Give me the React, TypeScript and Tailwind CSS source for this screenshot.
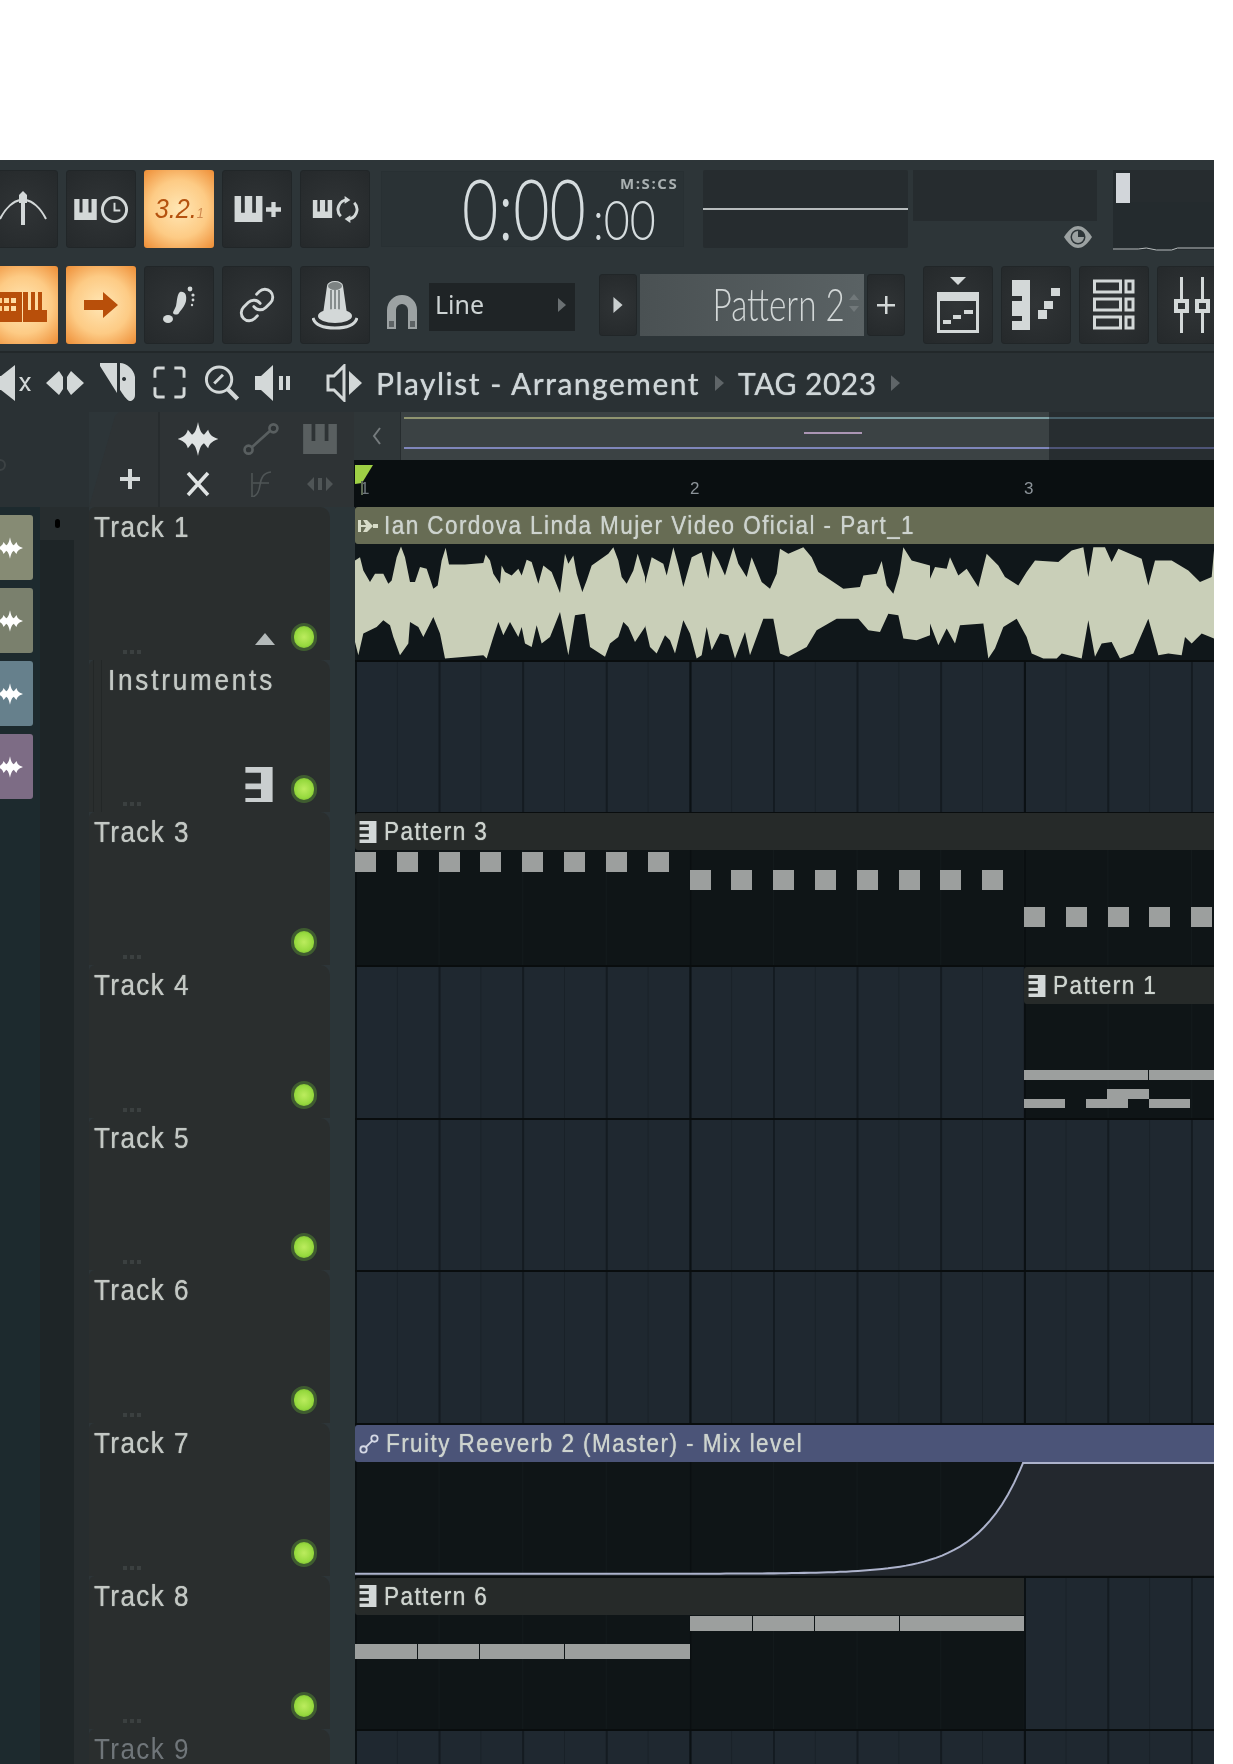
import type { ReactNode } from 'react';
import { Link } from 'lucide-react';

const cropA = (pts: number[][]) => pts.map(([x, y]) => [355 + x / 3, 540 + y / 3]);
const cropB = (pts: number[][]) => pts.map(([x, y]) => [640 + x / 3, 540 + y / 3]);
const cropC = (pts: number[][]) => pts.map(([x, y]) => [925 + x / 3, 540 + y / 3]);

const waveTop = [
  ...cropA([[0,60],[15,50],[25,90],[45,125],[60,100],[85,100],[100,130],[110,120],[125,50],[138,18],[150,50],[165,125],[180,125],[195,80],[215,85],[235,145],[248,135],[260,60],[272,22],[282,72],[330,72],[385,68],[392,42],[405,60],[415,100],[435,130],[440,75],[450,95],[470,105],[490,85],[500,105],[515,58],[530,65],[550,130],[565,75],[590,95],[615,158],[630,40],[640,70],[655,45],[665,100],[682,155],[695,120],[710,75],[760,40],[775,20],[790,60],[800,110],[815,130],[835,90],[848,40],[870,110]]),
  ...cropB([[15,130],[35,50],[70,70],[80,105],[100,20],[115,75],[130,140],[155,50],[185,35],[205,115],[218,30],[235,60],[255,105],[280,20],[295,70],[320,110],[335,50],[365,125],[390,145],[410,100],[420,25],[445,40],[490,20],[515,50],[535,95],[580,125],[610,145],[660,140],[670,105],[710,100],[725,62],[740,135],[760,160],[778,100],[790,20],[815,60],[870,75]]),
  ...cropC([[15,115],[30,80],[65,85],[75,50],[100,105],[125,85],[160,140],[185,40],[220,75],[240,110],[280,135],[305,95],[330,60],[400,65],[440,30],[475,20],[490,110],[505,20],[540,20],[560,65],[580,25],[650,55],[670,135],[690,60],[740,60],[790,90],[825,125],[860,110],[867,30]]),
];
const waveBottom = [
  ...cropA([[0,305],[10,345],[25,280],[65,260],[85,240],[105,255],[115,290],[135,345],[160,310],[165,245],[190,260],[205,290],[235,230],[255,280],[270,355],[385,345],[395,355],[415,290],[430,245],[445,285],[465,245],[490,290],[500,260],[510,310],[530,320],[545,255],[560,310],[585,290],[615,215],[640,345],[660,225],[690,220],[705,320],[750,350],[765,310],[790,290],[805,245],[820,260],[840,305],[870,260]]),
  ...cropB([[15,255],[30,320],[50,340],[75,285],[90,300],[105,340],[130,240],[150,280],[170,355],[185,345],[200,260],[215,330],[240,280],[265,285],[285,355],[315,275],[330,345],[370,235],[400,235],[420,340],[445,350],[500,320],[530,270],[590,235],[655,235],[685,270],[720,275],[745,220],[775,225],[790,295],[830,300],[870,285]]),
  ...cropC([[15,250],[40,315],[65,265],[90,310],[105,255],[175,250],[190,355],[210,325],[235,260],[275,235],[305,290],[320,340],[355,355],[395,355],[410,340],[470,355],[490,240],[510,350],[530,310],[560,305],[585,355],[625,340],[670,235],[700,345],[730,340],[770,345],[780,290],[800,310],[830,280],[867,295]]),
];
const wavePoints = [...waveTop, ...[...waveBottom].reverse()].map((p) => p.join(',')).join(' ');

// automation curve, exponential up to bar 3
const curve: string[] = ['355,1573', '700,1573'];
for (let x = 708; x <= 1023; x += 6) {
  const t = (x - 700) / 323;
  curve.push(`${x},${(1573 - (110 * (Math.exp(7.2 * t) - 1)) / (Math.exp(7.2) - 1)).toFixed(1)}`);
}
curve.push('1023,1463', '1214,1463');
const curveLine = curve.join(' ');

const ICON = '#d3d8d8';
const BROWN = '#b84f0a';

function PianoGlyph({ className = 'w-[30px] h-[28px]' }: { className?: string }) {
  return (
    <svg viewBox="0 0 30 28" className={className} fill={ICON}>
      <path d="M0 0h7v18h4V0h8v18h4V0h7v28H0z" />
    </svg>
  );
}

function Sparkle({ className = 'w-[26px] h-[38px]', color = '#fff' }: { className?: string; color?: string }) {
  return (
    <svg viewBox="0 0 48 40" className={className} fill={color}>
      <path d="M24 0c2 10 4 13 7 15 2-2 3-4 5-6 1 4 3 8 12 11-9 3-11 7-12 11-2-2-3-4-5-6-3 2-5 5-7 15-2-10-4-13-7-15-2 2-3 4-5 6-1-4-3-8-12-11 9-3 11-7 12-11 2 2 3 4 5 6 3-2 5-5 7-15z" />
    </svg>
  );
}

function Btn({ children, on, className = 'w-[70px] h-[78px]' }: { children?: ReactNode; on?: boolean; className?: string }) {
  return (
    <div
      className={`${className} shrink-0 flex items-center justify-center rounded-[3px] ${
        on
          ? 'bg-[radial-gradient(circle,#ffe6b4_0%,#fdcb85_55%,#ee8d35_100%)]'
          : 'bg-[radial-gradient(circle,#303436_0%,#25292b_100%)] border border-[#212628]'
      }`}
    >
      {children}
    </div>
  );
}

function Led() {
  return <div className="w-[26px] h-[28px] rounded-full border-[3px] border-[#3f5c30] bg-[radial-gradient(circle_at_50%_50%,#bcec5e_0%,#96d93e_60%,#67a52a_100%)]" />;
}

function NoteBlock({ className }: { className: string }) {
  return <div className={`absolute bg-[#9c9f9e] ${className}`} />;
}

function PatIcon() {
  return (
    <svg viewBox="0 0 20 26" className="w-[20px] h-[22px] shrink-0" fill="#d3d8d8">
      <path d="M0 0h20v26H0v-4h11v-3H0v-4h11v-4H0V7h11V4H0z" />
    </svg>
  );
}

const labelFont = 'font-["Liberation_Sans",sans-serif]';

function Clip({ className, header, icon, title, children, body = 'dark' }: { className: string; header: string; icon: ReactNode; title: string; children?: ReactNode; body?: 'dark' | 'none' }) {
  return (
    <div className={`absolute overflow-hidden flex flex-col ${className}`}>
      <div className={`h-[37px] shrink-0 flex items-center gap-[6px] pl-[3px] rounded-l-[3px] ${header}`}>
        {icon}
        <span className={`${labelFont} inline-block origin-left scale-x-[0.9] text-[25px] leading-none tracking-[1.6px] text-[#cdd3ce] [text-shadow:0_0_1px_#cdd3ce] whitespace-nowrap`}>{title}</span>
      </div>
      <div className={`relative flex-1 ${body === 'dark' ? 'bg-[#0f1517] bg-[linear-gradient(90deg,#0a0f11_1.5px,transparent_1.5px),linear-gradient(90deg,#131a1c_1px,transparent_1px)] bg-[size:334.5px_100%,83.6px_100%]' : ''}`}>
        {children}
      </div>
    </div>
  );
}

function TrackRow({ label, extra, indent, dim, hasLed = true, children }: { label: string; extra?: ReactNode; indent?: boolean; dim?: boolean; hasLed?: boolean; children?: ReactNode }) {
  return (
    <div className="h-[152.7px] shrink-0 flex">
      <div className="relative w-[241px] bg-[#2a2e2e] rounded-tr-[10px] rounded-tl-[6px]">
        <span className={`absolute top-[3px] ${indent ? 'left-[19px] tracking-[3.2px]' : 'left-[5px] tracking-[1.6px]'} ${labelFont} inline-block origin-left scale-x-[0.87] text-[30px] leading-[34px] ${dim ? 'text-[#70767a]' : 'text-[#c3c8c4] [text-shadow:0_0_1px_#c3c8c4]'}`}>{label}</span>
        {indent && <div className="absolute left-[4px] top-0 bottom-0 w-[9px] border-x border-[#232727]" />}
        <div className="absolute left-[34px] bottom-[6px] flex gap-[3px]">
          <div className="size-[4px] bg-[#3b4040]" /><div className="size-[4px] bg-[#3b4040]" /><div className="size-[4px] bg-[#3b4040]" />
        </div>
        {extra}
        {hasLed && <div className="absolute left-[202px] bottom-[9px]"><Led /></div>}
      </div>
      <div className="w-[25px] bg-[#2b3538]" />
      <div className="relative flex-1 border-t-2 border-[#090d0e] bg-[#1f2830] bg-[linear-gradient(90deg,#0b1114_2px,transparent_2px),linear-gradient(90deg,#141b21_1.5px,transparent_1.5px),linear-gradient(90deg,#192128_1px,transparent_1px)] bg-[size:334.5px_100%,83.6px_100%,41.8px_100%]">
        {children}
      </div>
    </div>
  );
}

export default function App() {
  const steps = [0, 1, 2, 3, 4, 5, 6, 7];
  return (
    <div className="w-[1233px] h-[1764px] bg-white pt-[160px] overflow-hidden">
      <div className="w-[1214px] h-[1604px] bg-[#2d3538] overflow-hidden flex flex-col font-['Open_Sans',sans-serif] blur-[0.5px]">
        {/* Top toolbar */}
        <div className="h-[96px] shrink-0 flex items-center -ml-[12px] pt-[2px]">
          <div className="flex gap-2">
            <Btn>
              <svg viewBox="0 0 50 40" className="w-[50px] h-[40px]" fill="none" stroke={ICON} strokeWidth="2">
                <path d="M2 30C8 18 16 12 22 11M48 30C42 18 34 12 28 11" />
                <path d="M25 2l4 4v8h-2v22h-4V14h-2V6z" fill={ICON} stroke="none" />
              </svg>
            </Btn>
            <Btn>
              <div className="flex items-center gap-[2px]">
                <PianoGlyph className="w-[25px] h-[21px]" />
                <svg viewBox="0 0 30 30" className="size-[29px]" fill="none" stroke={ICON} strokeWidth="3"><circle cx="15" cy="15" r="12.5" /><path d="M15 8v8h6" strokeWidth="2" /></svg>
              </div>
            </Btn>
            <Btn on>
              <span className="italic text-[#b5520f] text-[28px] font-['Liberation_Sans',sans-serif] leading-none inline-block scale-x-[0.9]">3.2.<span className="text-[14px] text-[#d08a50]">1</span></span>
            </Btn>
            <Btn>
              <div className="flex items-center gap-[3px]">
                <PianoGlyph className="w-[29px] h-[26px]" />
                <svg viewBox="0 0 14 14" className="size-[15px]" fill={ICON}><path d="M5 0h4v5h5v4H9v5H5V9H0V5h5z" /></svg>
              </div>
            </Btn>
            <Btn>
              <div className="flex items-center gap-[2px]">
                <PianoGlyph className="w-[23px] h-[18px]" />
                <svg viewBox="0 0 24 30" className="w-[23px] h-[29px]" fill="none" stroke={ICON} strokeWidth="3"><path d="M5 22a10 10 0 0 1 7-17M19 8a10 10 0 0 1-7 17" /><path d="M9 1l6 4-6 4zM15 21l-6 4 6 4z" fill={ICON} stroke="none" /></svg>
              </div>
            </Btn>
          </div>
          {/* Time display */}
          <div className="relative ml-[11px] w-[303px] h-[76px] shrink-0 bg-[#2a3235] border border-[#283033]">
            <div className="absolute left-[80px] top-[-6px] flex items-baseline text-[#d5dcde] font-['Lato',sans-serif] font-light">
              <span className="text-[84px] leading-[84px] inline-block w-[131px] origin-left scale-x-[0.745] whitespace-nowrap">0:00</span>
              <span className="text-[56px] leading-[56px] inline-block origin-left scale-x-[0.8] whitespace-nowrap">:00</span>
            </div>
            <span className="absolute left-[238px] top-[3px] text-[15px] tracking-[1.6px] font-bold leading-4 text-[#a9b0b1]">M:S:CS</span>
          </div>
          {/* Oscilloscope and hints */}
          <div className="relative ml-[19px] w-[205px] h-[78px] shrink-0 bg-[#262c2f] rounded-[2px] flex items-center">
            <div className="w-full h-[2px] bg-[#b7bcbd]" />
          </div>
          <div className="ml-[5px] w-[184px] h-[78px] shrink-0 flex flex-col">
            <div className="h-[55px] bg-[#262c2f]" />
            <div className="flex-1 flex justify-end items-center pr-[5px] pt-[5px]">
              <svg viewBox="0 0 28 22" className="w-[28px] h-[22px]"><path d="M0 11C5 3 10 0 14 0s9 3 14 11c-5 8-10 11-14 11S5 19 0 11z" fill="#9ba1a1" /><circle cx="14" cy="11" r="7.5" fill="#2d3538" /><path d="M14 5a6 6 0 1 0 6 6h-6z" fill="#9ba1a1" /></svg>
            </div>
          </div>
          <div className="relative ml-[16px] flex-1 h-[80px] bg-[#242b2e] mt-[2px]">
            <div className="absolute left-[3px] top-[3px] w-[14px] h-[30px] bg-[#d2d6da]" />
            <div className="absolute left-[17px] top-[0px] right-0 h-[32px] bg-[#262c2f]" />
            <svg viewBox="0 0 100 8" preserveAspectRatio="none" className="absolute left-0 right-0 bottom-[-2px] w-full h-[8px]" fill="none" stroke="#b7bcbd" strokeWidth="1"><path d="M0 5h25l8-1 10 2h15l6-2h36" vectorEffect="non-scaling-stroke" /></svg>
          </div>
        </div>

        {/* Second toolbar */}
        <div className="h-[97px] shrink-0 flex items-center -ml-[12px] border-b-2 border-[#22282a] pt-[2px]">
          <div className="flex gap-2 shrink-0">
            <Btn on>
              <div className="flex gap-[1px] -ml-[8px]">
                <svg viewBox="0 0 30 34" className="w-[30px] h-[34px]" fill={BROWN}><path d="M0 4h30v30H0zM5 10v5h5v-5zm7 0v5h5v-5zm7 0v5h5v-5zM5 18v5h5v-5zm7 0v5h5v-5zm7 0v5h5v-5z" /></svg>
                <svg viewBox="0 0 24 34" className="w-[24px] h-[34px]" fill={BROWN}><path d="M0 4h5v18h3V4h4v18h3V4h4v18h5v12H0z" /></svg>
              </div>
            </Btn>
            <Btn on>
              <svg viewBox="0 0 34 26" className="w-[34px] h-[26px]" fill={BROWN}><path d="M0 8h19V0l15 13-15 13v-8H0z" /></svg>
            </Btn>
            <Btn>
              <svg viewBox="0 0 34 38" className="w-[34px] h-[38px]" fill={ICON}>
                <ellipse cx="6" cy="33" rx="5" ry="4" />
                <path d="M18 6c5-1 7 3 6 9-1 5-5 9-7 12-1 2-5 2-6 0 0-2 2-4 3-7 1-4 1-12 4-14z" />
                <circle cx="28" cy="3" r="2.4" /><circle cx="31" cy="9" r="1.6" /><circle cx="31" cy="14" r="1.4" /><circle cx="30" cy="19" r="1.2" />
              </svg>
            </Btn>
            <Btn>
              <Link className="size-[38px] text-[#d3d8d8]" strokeWidth={1.8} />
            </Btn>
            <Btn>
              <svg viewBox="0 0 46 50" className="w-[46px] h-[50px]">
                <path d="M15 6a8 5 0 0 1 16 0l4 28H11z" fill={ICON} />
                <ellipse cx="23" cy="6" rx="7" ry="4" fill="#7d8383" />
                <path d="M19 10v20M23 10v20M27 10v20" stroke="#6e7474" strokeWidth="1.5" />
                <ellipse cx="23" cy="36" rx="17" ry="7" fill={ICON} />
                <path d="M1 38c2 7 11 10 22 10s20-3 22-10" fill="none" stroke={ICON} strokeWidth="3" />
              </svg>
            </Btn>
          </div>
          <svg viewBox="0 0 30 34" className="ml-[17px] mt-[15px] w-[30px] h-[34px] shrink-0" fill="#9ca2a3">
            <path d="M0 15a15 15 0 0 1 30 0v19H21V15a6 6 0 0 0-12 0v19H0z" />
            <path d="M2 26h5v6H2zM23 26h5v6h-5z" fill="#5d6365" />
          </svg>
          <div className="ml-[12px] mt-[4px] w-[146px] h-[48px] shrink-0 bg-[#1f2426] flex items-center justify-between pl-[6px] pr-[9px] pb-[4px]">
            <span className="text-[25px] leading-none text-[#cdd3d3] font-['Noto_Sans',sans-serif]">Line</span>
            <svg viewBox="0 0 8 14" className="w-[8px] h-[14px]" fill="#6a7072"><path d="M0 0l8 7-8 7z" /></svg>
          </div>
          <Btn className="ml-[24px] w-[38px] h-[62px]">
            <svg viewBox="0 0 8 14" className="w-[10px] h-[16px]" fill="#c9cecf"><path d="M0 0l8 7-8 7z" /></svg>
          </Btn>
          <div className="ml-[3px] w-[224px] h-[62px] shrink-0 bg-[linear-gradient(90deg,#4a5153,#5a6264)] flex items-center justify-end pr-[19px] relative">
            <span className="inline-block text-[45px] leading-none text-[#d2d7d7] font-['Lato',sans-serif] font-light origin-right scale-x-[0.74] whitespace-nowrap">Pattern 2</span>
            <div className="absolute right-[5px] top-[20px] flex flex-col gap-[6px]">
              <svg viewBox="0 0 10 6" className="w-[10px] h-[6px]" fill="#71787a"><path d="M0 6l5-6 5 6z" /></svg>
              <svg viewBox="0 0 10 6" className="w-[10px] h-[6px]" fill="#71787a"><path d="M0 0l5 6 5-6z" /></svg>
            </div>
          </div>
          <Btn className="ml-[3px] w-[38px] h-[62px]">
            <svg viewBox="0 0 18 18" className="size-[18px]" fill={ICON}><path d="M8 0h2.5v8H18v2.5h-7.5V18H8v-7.5H0V8h8z" /></svg>
          </Btn>
          <div className="ml-[18px] flex gap-2 shrink-0">
            <Btn>
              <svg viewBox="0 0 44 56" className="w-[44px] h-[56px]" fill={ICON}>
                <path d="M14 0h16l-8 8z" />
                <path d="M1 15h42v41H1zm3 9v29h36V24z" />
                <path d="M7 43h8v4H7zM17 38h8v4h-8zM28 33h9v4h-9z" />
              </svg>
            </Btn>
            <Btn>
              <svg viewBox="0 0 48 50" className="w-[48px] h-[50px]" fill={ICON}>
                <path d="M0 0h18v50H0v-9h10v-5H0V21h10v-5H0z" />
                <path d="M26 30h9v9h-9zM32 21h9v8h-9zM39 8h9v8h-9z" />
              </svg>
            </Btn>
            <Btn>
              <svg viewBox="0 0 42 52" className="w-[42px] h-[52px]" fill="none" stroke={ICON} strokeWidth="3">
                <rect x="1.5" y="2" width="26" height="11" /><rect x="33" y="2" width="7" height="11" />
                <rect x="1.5" y="20" width="26" height="11" /><rect x="33" y="20" width="7" height="11" />
                <rect x="1.5" y="38" width="26" height="11" /><rect x="33" y="38" width="7" height="11" />
              </svg>
            </Btn>
            <Btn>
              <svg viewBox="0 0 38 56" className="w-[38px] h-[56px]" fill={ICON}>
                <path d="M7 0h3v22H7zM28 0h3v22h-3zM7 36h3v20H7zM28 36h3v20h-3z" />
                <path d="M1 22h15v14H1zM22 22h15v14H22zM5 26v6h7v-6zM26 26v6h7v-6z" fillRule="evenodd" />
              </svg>
            </Btn>
          </div>
        </div>

        {/* Playlist title bar */}
        <div className="h-[59px] shrink-0 flex items-center bg-[#2a3134] relative">
          <svg viewBox="0 0 34 38" className="w-[34px] h-[38px] shrink-0 ml-[-1px]" fill={ICON}><path d="M-6 12h8L16 1v36L2 26h-8zM20 13l3 0 3 5 3-5h3l-5 7 5 7h-3l-3-5-3 5h-3l5-7z" /></svg>
          <svg viewBox="0 0 38 26" className="ml-[13px] w-[38px] h-[26px] shrink-0" fill={ICON}><path d="M0 13L13 1l4 6v12l-4 6zM38 13L25 1l-4 6v12l4 6z" /></svg>
          <svg viewBox="0 0 36 40" className="ml-[16px] w-[36px] h-[40px] shrink-0" fill={ICON}><path d="M0 0h17v30L0 3zM20 0c6 0 14 6 15 14v18c0 4-3 6-5 6-3 0-8-8-10-11zM24 14a2 2 0 1 0 .1 0z" /></svg>
          <svg viewBox="0 0 34 34" className="ml-[17px] size-[33px] shrink-0" fill="none" stroke={ICON} strokeWidth="3"><path d="M12 2H5a3 3 0 0 0-3 3v7M22 2h7a3 3 0 0 1 3 3v7M12 32H5a3 3 0 0 1-3-3v-7M22 32h7a3 3 0 0 0 3-3v-7" /></svg>
          <svg viewBox="0 0 36 38" className="ml-[18px] w-[36px] h-[37px] shrink-0" fill="none" stroke={ICON} strokeWidth="3"><circle cx="15" cy="16" r="13" /><path d="M24 26l10 10" strokeWidth="4.5" /><path d="M10 20l9-9" strokeWidth="3" /></svg>
          <svg viewBox="0 0 36 38" className="ml-[15px] w-[36px] h-[38px] shrink-0" fill={ICON}><path d="M0 12h6L18 1v36L6 26H0zM24 12h4v14h-4zM31 12h4v14h-4z" /></svg>
          <svg viewBox="0 0 36 38" className="ml-[35px] w-[36px] h-[38px] shrink-0"><path d="M2 12h6L18 2v34L8 26H2z" fill="none" stroke={ICON} strokeWidth="3" /><path d="M23 7l13 12-13 12z" fill={ICON} /></svg>
          <span className="ml-[14px] text-[30px] tracking-[1.5px] leading-none text-[#cfd6d8] [text-shadow:0_0_1px_#cfd6d8] font-['Lato',sans-serif] whitespace-nowrap">Playlist - Arrangement</span>
          <svg viewBox="0 0 8 14" className="ml-[15px] w-[9px] h-[16px] shrink-0" fill="#5f6568"><path d="M0 0l8 7-8 7z" /></svg>
          <span className="ml-[14px] text-[30px] tracking-[0.5px] leading-none text-[#cfd6d8] [text-shadow:0_0_1px_#cfd6d8] font-['Lato',sans-serif] whitespace-nowrap">TAG 2023</span>
          <svg viewBox="0 0 8 14" className="ml-[14px] w-[9px] h-[16px] shrink-0" fill="#5f6568"><path d="M0 0l8 7-8 7z" /></svg>
        </div>

        {/* Main area */}
        <div className="flex-1 flex min-h-0">
          {/* Channel rack sliver */}
          <div className="w-[89px] shrink-0 flex flex-col">
            <div className="h-[95px] shrink-0 bg-[#2a3134] flex items-end">
              <div className="mb-[36px] ml-[-6px] size-[12px] rounded-full border-2 border-[#3c4244]" />
            </div>
            <div className="flex-1 flex bg-[#1d2a2e]">
              <div className="w-[33px] pt-[8px] flex flex-col gap-[8px]">
                <div className="h-[65px] rounded-r-[3px] bg-[#868b74] flex items-center -ml-[3px]"><Sparkle /></div>
                <div className="h-[65px] rounded-r-[3px] bg-[#7a806d] flex items-center -ml-[3px]"><Sparkle /></div>
                <div className="h-[65px] rounded-r-[3px] bg-[#66808c] flex items-center -ml-[3px]"><Sparkle /></div>
                <div className="h-[65px] rounded-r-[3px] bg-[#7d6c85] flex items-center -ml-[3px]"><Sparkle /></div>
              </div>
              <div className="ml-[7px] w-[34px] bg-[#1e2527]">
                <div className="h-[33px] bg-[#272d2f] flex items-center justify-center"><div className="w-[5px] h-[9px] rounded-full bg-black" /></div>
              </div>
              <div className="w-[15px] bg-[#272d2f]" />
            </div>
          </div>

          {/* Playlist */}
          <div className="flex-1 flex flex-col min-w-0">
            <div className="h-[95px] shrink-0 flex">
              <div className="relative w-[265px] shrink-0 flex bg-[#2e3335] [clip-path:polygon(0_100%,26px_4px,30px_0,100%_0,100%_100%)]">
                <div className="w-[71px] border-r-2 border-[#272c2e] flex items-end justify-center pb-[18px] pl-[12px]">
                  <svg viewBox="0 0 20 20" className="size-[20px]" fill={ICON}><path d="M8 0h4v8h8v4h-8v8H8v-8H0V8h8z" /></svg>
                </div>
                <div className="flex-1 grid grid-cols-[76px_50px_68px] grid-rows-2 pt-[4px] place-items-center">
                  <Sparkle className="w-[48px] h-[34px]" color="#dfe3e3" />
                  <svg viewBox="0 0 40 36" className="w-[38px] h-[32px]" fill="none" stroke="#595f60" strokeWidth="3"><circle cx="6" cy="30" r="4.5" /><circle cx="34" cy="6" r="4.5" /><path d="M10 27l20-18" /></svg>
                  <svg viewBox="0 0 36 32" className="w-[36px] h-[30px]" fill="#595f60"><path d="M0 0h9v18h4V0h10v18h4V0h9v32H0z" /></svg>
                  <svg viewBox="0 0 26 26" className="size-[26px]" fill="none" stroke="#dfe3e3" strokeWidth="3.5"><path d="M3 2l20 22M23 2L3 24" /></svg>
                  <svg viewBox="0 0 24 26" className="w-[24px] h-[26px]" fill="none" stroke="#4f5556" strokeWidth="1.6"><path d="M2 26c6 0 8-5 9-12S14 2 22 1M4 12h16M3 2v24" /></svg>
                  <svg viewBox="0 0 26 16" className="w-[26px] h-[16px]" fill="#4f5556"><path d="M0 8l7-7v14zM26 8l-7-7v14zM11 2h4v12h-4z" /></svg>
                </div>
              </div>
              <div className="flex-1 flex flex-col min-w-0">
                <div className="h-[48px] shrink-0 flex">
                  <div className="w-[47px] shrink-0 bg-[#2f3638] border-r border-[#262c2e] flex items-center justify-center">
                    <svg viewBox="0 0 10 18" className="w-[10px] h-[18px]" fill="none" stroke="#757b7d" strokeWidth="2"><path d="M8 1L2 9l6 8" /></svg>
                  </div>
                  <div className="relative flex-1 bg-[#3b4244]">
                    <div className="absolute left-[648px] right-0 top-0 bottom-0 bg-[#272d30]" />
                    <div className="absolute left-[3px] w-[456px] top-[5px] h-[2px] bg-[#8f9470]" />
                    <div className="absolute left-[459px] w-[189px] top-[5px] h-[2px] bg-[#7ea0a4]" />
                    <div className="absolute left-[648px] right-0 top-[5px] h-[2px] bg-[#49616a]" />
                    <div className="absolute left-[403px] w-[58px] top-[20px] h-[2px] bg-[#ab95b4]" />
                    <div className="absolute left-[3px] w-[645px] top-[35px] h-[2px] bg-[#7f86bb]" />
                    <div className="absolute left-[648px] right-0 top-[35px] h-[2px] bg-[#4e5477]" />
                  </div>
                </div>
                <div className="relative flex-1 bg-[#0a0f11]">
                  <span className={`absolute left-[6px] top-[16px] ${labelFont} text-[17px] text-[#6f767c]`}>1</span>
                  <span className={`absolute left-[336px] top-[16px] ${labelFont} text-[17px] text-[#8c9399]`}>2</span>
                  <span className={`absolute left-[670px] top-[16px] ${labelFont} text-[17px] text-[#8c9399]`}>3</span>
                  <svg viewBox="0 0 18 30" className="absolute left-[1px] top-[5px] w-[18px] h-[30px]"><path d="M0 0h18L7 18l-7 1z" fill="#9fd045" /><path d="M6 16h2v14H6z" fill="#5d6a55" /></svg>
                </div>
              </div>
            </div>

            <div className="flex-1 flex flex-col">
              <TrackRow
                label="Track 1"
                extra={<svg viewBox="0 0 20 12" className="absolute left-[166px] bottom-[15px] w-[20px] h-[12px]" fill="#b3b9b9"><path d="M0 12L10 0l10 12z" /></svg>}
              >
                <Clip
                  className="left-0 right-0 top-[-2px] bottom-0"
                  header="bg-[#676c54]"
                  icon={<svg viewBox="0 0 20 14" className="w-[20px] h-[14px] shrink-0" fill="#d8dcc8"><path d="M0 1h3v12H0zM3 6h5L5 1h4l6 6-6 6H5l3-5H3zM15 5h5v4h-5z" /></svg>}
                  title="Ian Cordova Linda Mujer Video Oficial - Part_1"
                  body="none"
                >
                  <div className="absolute inset-0 bg-[#10171a]" />
                  <svg viewBox="355 543.5 859 116" preserveAspectRatio="none" className="absolute inset-0 size-full" fill="#c9cfb8">
                    <polygon points={wavePoints} />
                  </svg>
                </Clip>
              </TrackRow>
              <TrackRow
                label="Instruments"
                indent
                extra={
                  <svg viewBox="0 0 28 36" className="absolute left-[156px] bottom-[10px] w-[28px] h-[35px]" fill="#c9cecf">
                    <path d="M0 0h28v36H0v-4h16v-9H0v-6h16V6H0z" />
                  </svg>
                }
              />
              <TrackRow label="Track 3">
                <Clip className="left-0 right-0 top-[-1px] bottom-0" header="bg-[#262a29]" icon={<PatIcon />} title="Pattern 3">
                  {steps.map((i) => <NoteBlock key={`a${i}`} className={`top-[2px] h-[20px] w-[21px] ${['left-[0px]','left-[41.8px]','left-[83.6px]','left-[125.4px]','left-[167.2px]','left-[209px]','left-[250.8px]','left-[292.6px]'][i]}`} />)}
                  {steps.map((i) => <NoteBlock key={`b${i}`} className={`top-[20px] h-[20px] w-[21px] ${['left-[334.5px]','left-[376.3px]','left-[418.1px]','left-[459.9px]','left-[501.7px]','left-[543.5px]','left-[585.3px]','left-[627.1px]'][i]}`} />)}
                  {[0, 1, 2, 3, 4].map((i) => <NoteBlock key={`c${i}`} className={`top-[57px] h-[20px] w-[21px] ${['left-[669px]','left-[710.8px]','left-[752.6px]','left-[794.4px]','left-[836.2px]'][i]}`} />)}
                </Clip>
              </TrackRow>
              <TrackRow label="Track 4">
                <Clip className="left-[669px] right-0 top-0 bottom-0" header="bg-[#262a29]" icon={<PatIcon />} title="Pattern 1">
                  <NoteBlock className="top-[66px] left-0 w-[124px] h-[10px]" />
                  <NoteBlock className="top-[66px] left-[125px] right-0 h-[10px]" />
                  <NoteBlock className="top-[95px] left-0 w-[41px] h-[9px]" />
                  <NoteBlock className="top-[95px] left-[62px] w-[42px] h-[9px]" />
                  <NoteBlock className="top-[85px] left-[83px] w-[42px] h-[10px]" />
                  <NoteBlock className="top-[95px] left-[125px] w-[41px] h-[9px]" />
                </Clip>
              </TrackRow>
              <TrackRow label="Track 5" />
              <TrackRow label="Track 6" />
              <TrackRow label="Track 7">
                <Clip
                  className="left-0 right-0 top-0 bottom-0"
                  header="bg-[#4b5478]"
                  icon={<svg viewBox="0 0 22 22" className="w-[22px] h-[20px] shrink-0" fill="none" stroke="#d5d9e6" strokeWidth="2"><circle cx="5" cy="17" r="3.5" /><circle cx="17" cy="5" r="3.5" /><path d="M7.5 14.5l7-7" /></svg>}
                  title="Fruity Reeverb 2 (Master) - Mix level"
                >
                  <svg viewBox="355 1462 859 113" preserveAspectRatio="none" className="absolute inset-0 size-full">
                    <polygon points={`${curveLine} 1214,1575 355,1575`} fill="#23282e" />
                    <polyline points={curveLine} fill="none" stroke="#adb3cc" strokeWidth="2" />
                  </svg>
                </Clip>
              </TrackRow>
              <TrackRow label="Track 8">
                <Clip className="left-0 w-[669px] top-0 bottom-0" header="bg-[#262a29]" icon={<PatIcon />} title="Pattern 6">
                  <div className="absolute left-0 w-[334.5px] top-[29px] h-[15px] flex gap-[1px]">
                    <div className="w-[62px] bg-[#9c9f9e]" /><div className="w-[61px] bg-[#9c9f9e]" /><div className="w-[84px] bg-[#9c9f9e]" /><div className="flex-1 bg-[#9c9f9e]" />
                  </div>
                  <div className="absolute left-[334.5px] right-0 top-[1px] h-[15px] flex gap-[1px]">
                    <div className="w-[62px] bg-[#9c9f9e]" /><div className="w-[61px] bg-[#9c9f9e]" /><div className="w-[84px] bg-[#9c9f9e]" /><div className="flex-1 bg-[#9c9f9e]" />
                  </div>
                </Clip>
              </TrackRow>
              <TrackRow label="Track 9" dim hasLed={false} />
            </div>
          </div>
        </div>
      </div>
    </div>
  );
}
